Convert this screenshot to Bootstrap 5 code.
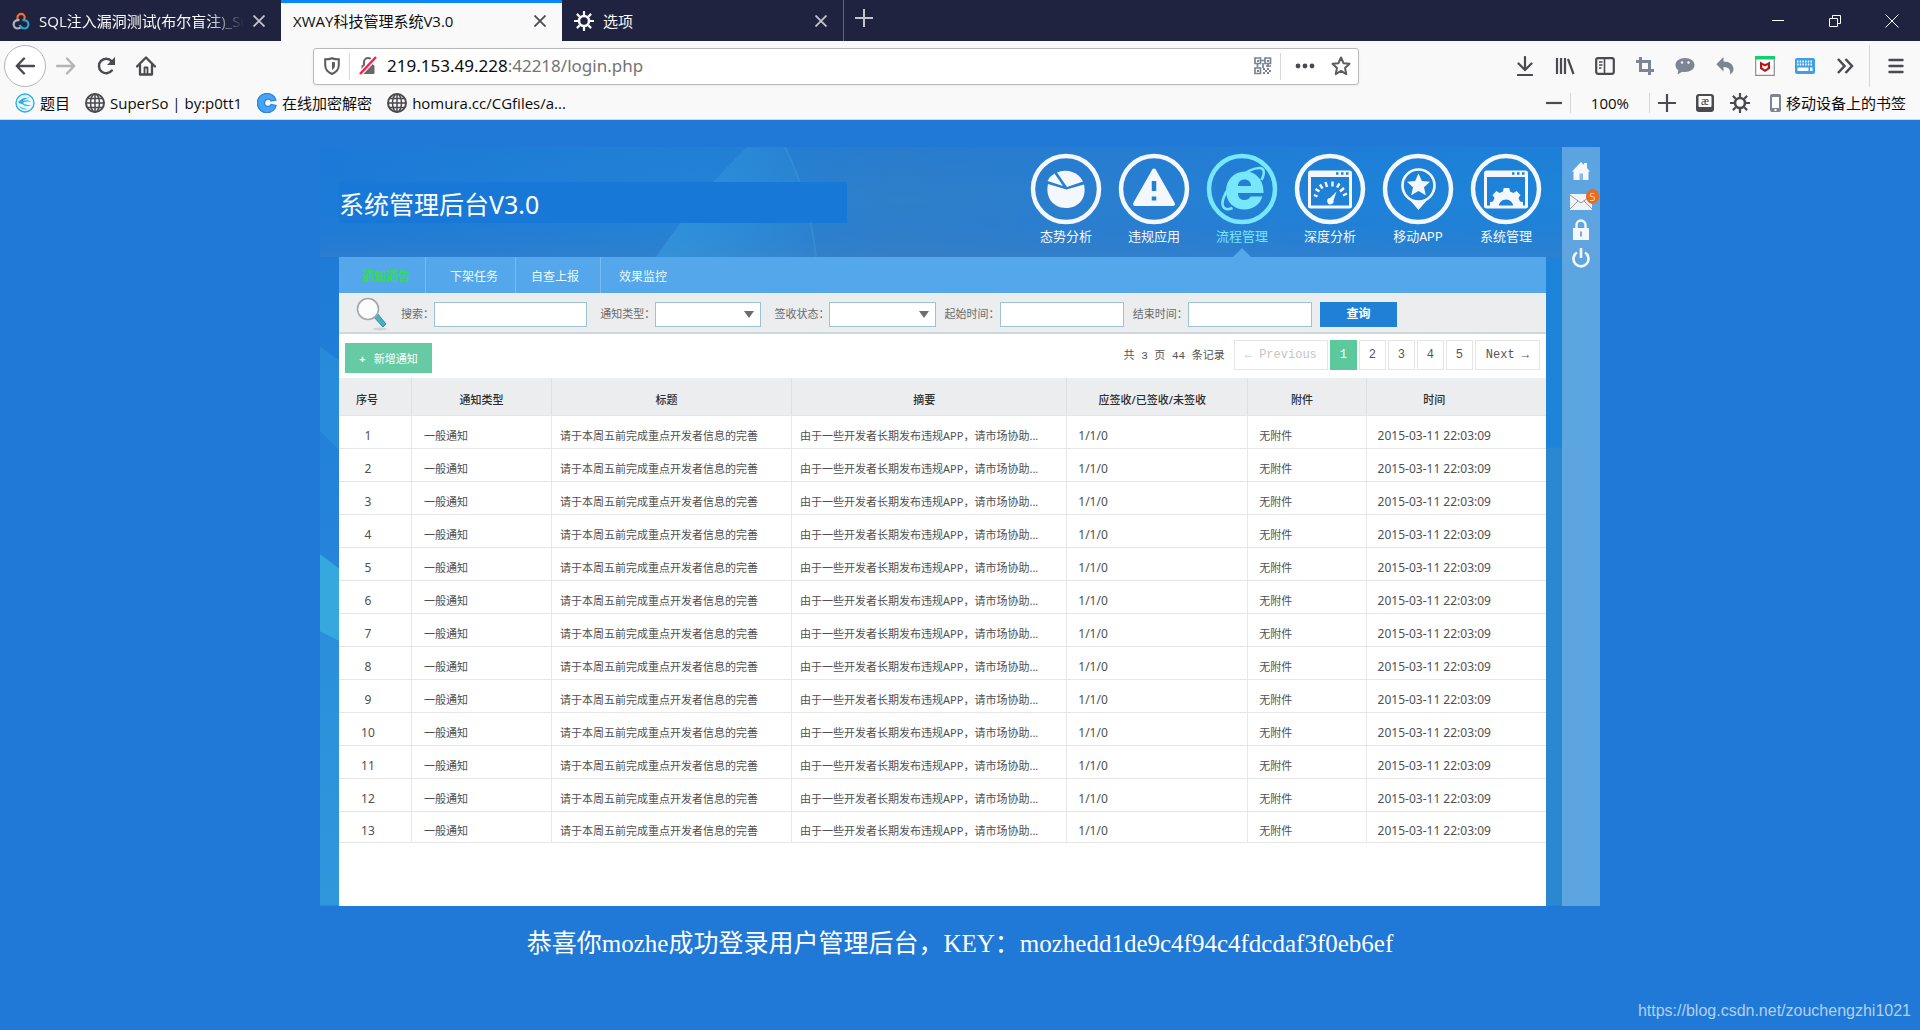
<!DOCTYPE html>
<html lang="zh-CN">
<head>
<meta charset="utf-8">
<meta name="viewport" content="width=device-width, initial-scale=1">
<title>XWAY科技管理系统V3.0</title>
<link href="https://cdn.jsdelivr.net/npm/bootstrap@5.3.0/dist/css/bootstrap.min.css" rel="stylesheet">
<style>
  body { font-family: "Open Sans", "Noto Sans CJK SC", sans-serif; font-size: 15px; line-height: 20px; color: #0c0c0d; background: #2079d6; }
  button { background: none; border: 0; padding: 0; color: inherit; }
  svg { display: block; flex: none; }
  a { color: inherit; text-decoration: none; }

  /* tab strip */
  .tabstrip { background: #20233f; height: 41px; color: #f9f9fa; }
  .browser-tab { width: 281px; padding: 0 16px 0 12px; gap: 9px; }
  .browser-tab .tab-title { flex: 1; min-width: 0; overflow: hidden; white-space: nowrap; }
  .browser-tab.fading .tab-title { -webkit-mask-image: linear-gradient(90deg, #000 82%, transparent); mask-image: linear-gradient(90deg, #000 82%, transparent); }
  .browser-tab.current { background: #f9f9fa; color: #0c0c0d; border-top: 3px solid #0a84ff; padding-bottom: 3px; }
  .browser-tab.tab-rule { width: 282px; border-right: 1px solid #62647a; }
  .win-btn { width: 57px; height: 41px; }

  /* toolbar */
  .chrome-bars { background: #f9f9fa; color: #4a4a4f; border-bottom: 1px solid #d7d7db; }
  .toolbar { display: grid; grid-template-columns: 313px minmax(0, 1fr) 561px; height: 50px; }
  .tool-btn { width: 40px; height: 36px; }
  .back-btn { width: 42px; height: 42px; border: 1px solid #b5b5b8; border-radius: 50%; background: #fff; }
  .urlbar { height: 37px; background: #fff; border: 1px solid #b9b9bb; border-radius: 3px; box-shadow: 0 1px 3px rgba(0,0,0,.06); }
  .urlbar .url-text { font-size: 17px; line-height: 24px; color: #737373; flex: 1; min-width: 0; padding-left: 10px; white-space: nowrap; overflow: hidden; }
  .urlbar .url-text { font-family: "Noto Sans", sans-serif; }
  .urlbar .url-text b { font-weight: 400; color: #0c0c0d; }
  .star-btn { padding: 0 7px 0 6px; }
  .menu-btn { margin-left: 6px; }
  .v-rule { width: 1px; background: #d7d7db; }
  .bookmarks { height: 28px; padding: 0 14px 4px 15px; color: #0c0c0d; white-space: nowrap; }
  .bookmarks a { gap: 5px; }
  .bookmarks > a { margin-right: 15px; }
  .charset-btn { padding: 0 16px 0 20px; }

  /* admin console */
  .console { background: #2381d3; color: #fff; }
  .console-bg { position: absolute; inset: 0; width: 100%; height: 100%; }
  .console-main { padding: 0 16px 0 19px; min-width: 0; }
  .console-head { height: 110px; margin-right: -4px; }
  .console-title { flex: 0 1 508px; height: 41px; margin-top: 35px; background: #1878d8; font: 400 25px/44px "Noto Sans", "Noto Sans CJK SC", sans-serif; white-space: nowrap; }
  .main-nav .nav-item { width: 88px; }
  .main-nav .nav-link { padding: 6px 0 0; color: #f4f8fc; font: 400 13px/26px "Liberation Mono", "Noto Sans CJK SC", sans-serif; }
  .main-nav .nav-link.active { color: #78e6fb; }
  .main-nav .nav-item.has-pointer::after { content: ""; position: absolute; left: 35px; bottom: 0; border: 9px solid transparent; border-top: 0; border-bottom-color: #54a7ea; }
  .sub-nav { background: #54a7ea; height: 36px; padding-left: 8px; font-size: 12px; line-height: 20px; }
  .sub-nav .nav-link { color: #eef7ff; padding: 0; }
  .sub-nav .nav-link.active { color: #2fe04a; font-weight: 700; }
  .sub-nav .nav-item { padding: 10px 15px 6px; border-right: 1px solid #79bcf0; }
  .sub-nav .nav-item:nth-child(2) { padding-left: 24px; padding-right: 17px; }
  .sub-nav .nav-item:nth-child(3) { padding-right: 21px; }
  .sub-nav .nav-item:nth-child(4) { border: 0; padding-left: 18px; }
  .filter-bar { background: #ebedef; border-bottom: 2px solid #cfd8dd; height: 41px; padding: 3px 149px 0 16px; color: #6b6b6b; font-size: 11px; }
  .filter-bar label { white-space: nowrap; }
  .filter-field { margin-right: 13px; }
  .filter-date { margin-right: 9px; }
  .filter-bar input, .filter-bar select { height: 25px; width: 100%; border: 1px solid #9cc3d3; border-radius: 0; background: #fff; padding: 0 4px; font-size: 12px; appearance: none; }
  .filter-bar div { display: flex; }
  .arrow-select::after { content: ""; position: absolute; right: 7px; top: 9px; border: 5px solid transparent; border-top: 7px solid #6d6d6d; border-bottom: 0; pointer-events: none; }
  .query-btn { background: #1f80d6; color: #fff; width: 77px; height: 25px; font-size: 12px; font-weight: 700; }
  .action-row { background: #fff; height: 44px; padding: 0 6px; color: #555; }
  .add-btn { background: #66cba5; color: #fff; width: 87px; height: 30px; font-size: 11px; padding-top: 2px; margin-top: 4px; }
  .pager { gap: 2px; font: 400 12px/28px "Liberation Mono", "Noto Sans CJK SC", monospace; }
  .pager .page-count { font-size: 11px; line-height: 32px; padding-right: 7px; }
  .pager a { min-width: 27px; height: 30px; border: 1px solid #e3e5e6; text-align: center; }
  .pager a.wide { padding: 0 10px; }
  .pager a.now { background: #5bc99c; border-color: #5bc99c; color: #fff; }
  .pager a.off { color: #c4c4c4; }

  .notice-wrap { background: #fff; padding-bottom: 63px; }
  .notice { width: 100%; table-layout: fixed; font: 400 11px/20px "Noto Sans", "Noto Sans CJK SC", sans-serif; color: #505050; }
  .notice th { background: #ecedef; color: #2d2d2d; font-weight: 500; font-size: 11px; height: 37px; text-align: center; padding: 7px 10px 0 0; border-right: 1px solid #dfe0e1; border-bottom: 1px solid #e4e5e6; }
  .notice td { height: 33px; padding: 8px 0 0 8px; white-space: nowrap; overflow: hidden; border-right: 1px solid #e8e8e8; border-bottom: 1px solid #e6e6e6; }
  .notice th:last-child, .notice td:last-child { border-right: 0; }
  .notice th:last-child { padding-right: 44px; }
  .notice th:first-child { padding-right: 16px; }
  .notice th:nth-child(2) { padding-right: 0; }
  .notice td:first-child { text-align: center; padding: 8px 14px 0 0; font-size: 12px; }
  .notice td:nth-child(2) { padding-left: 12px; }
  .notice td.latin { font-size: 12px; padding-left: 11px; }
  .notice td.attach { padding-left: 11px; }
  .notice tbody tr:last-child td { height: 31px; padding-top: 9px; }

  .side-rail { flex: 0 0 38px; background: rgba(120, 180, 228, .7); padding-top: 14px; }
  .side-rail a { height: 29px; width: 26px; }
  .mail-badge { position: absolute; right: -5px; top: -1px; width: 13px; height: 15px; border-radius: 50%; background: #ec6a1c; color: #ffd9b0; font-size: 11px; line-height: 15px; text-align: center; }

  .key-line { font: 400 25px/34px "Liberation Serif", "Noto Sans CJK SC", serif; color: #fff; margin: 21px 0 0; }
  .watermark { font: 400 16px/20px "Liberation Sans", Arial, sans-serif; color: rgba(255,255,255,.66); padding: 0 9px 9px 0; }
</style>
</head>
<body class="d-flex flex-column min-vh-100">

<header>
  <div class="tabstrip d-flex">
    <div class="browser-tab fading d-flex align-items-center">
      <svg width="18" height="18" viewBox="0 0 18 18" fill="none" stroke-width="2.2"><path d="M5.5 8V5.500a3.600 3.600 0 0 1 7.200 0c0 1.200-.5 2-1.300 2.800" stroke="#f0702c"/><path d="M7.500 8.300C4.500 7.500 1.600 9.500 1.600 12.300c0 2.500 2 4.200 4.200 4.200 1.700 0 2.700-.8 3.700-2" stroke="#aeb4c4"/><path d="M10.500 8.300c3-.8 5.900 1.200 5.900 4 0 2.500-2 4.200-4.200 4.200-2.600 0-3.500-1.700-4.700-3.500" stroke="#21a4d6"/></svg>
      <span class="tab-title">SQL注入漏洞测试(布尔盲注)_SQ</span>
      <button aria-label="关闭标签页"><svg width="12" height="12" viewBox="0 0 12 12" stroke="#c3c4cf" stroke-width="1.800"><path d="M.5.5l11 11M11.500.5l-11 11"/></svg></button>
    </div>
    <div class="browser-tab current d-flex align-items-center">
      <span class="tab-title">XWAY科技管理系统V3.0</span>
      <button aria-label="关闭标签页"><svg width="12" height="12" viewBox="0 0 12 12" stroke="#4a4a4f" stroke-width="1.800"><path d="M.5.5l11 11M11.500.5l-11 11"/></svg></button>
    </div>
    <div class="browser-tab tab-rule d-flex align-items-center">
      <svg width="20" height="20" viewBox="0 0 20 20" fill="none" stroke="#f9f9fa"><circle cx="10" cy="10" r="5" stroke-width="2.600"/><path d="M10 0v4M10 16v4M0 10h4M16 10h4M2.900 2.900l2.800 2.800M14.300 14.300l2.800 2.800M17.100 2.900l-2.800 2.800M5.700 14.300l-2.800 2.800" stroke-width="2.200"/></svg>
      <span class="tab-title">选项</span>
      <button aria-label="关闭标签页"><svg width="12" height="12" viewBox="0 0 12 12" stroke="#c3c4cf" stroke-width="1.800"><path d="M.5.5l11 11M11.500.5l-11 11"/></svg></button>
    </div>
    <button class="tool-btn d-flex align-items-center justify-content-center" aria-label="新建标签页"><svg width="18" height="18" viewBox="0 0 18 18" stroke="#c3c4cf" stroke-width="2"><path d="M9 0v18M0 9h18"/></svg></button>
    <div class="d-flex ms-auto">
      <button class="win-btn d-flex align-items-center justify-content-center" aria-label="最小化"><svg width="12" height="12" viewBox="0 0 12 12" stroke="#fff"><path d="M0 5.500h12"/></svg></button>
      <button class="win-btn d-flex align-items-center justify-content-center" aria-label="还原"><svg width="12" height="12" viewBox="0 0 12 12" stroke="#fff" fill="none"><path d="M.5 3.500h8v8h-8zM3.500 3V.5h8v8H9"/></svg></button>
      <button class="win-btn d-flex align-items-center justify-content-center" aria-label="关闭"><svg width="14" height="14" viewBox="0 0 14 14" stroke="#fff"><path d="M.5.5l13 13M13.500.5l-13 13"/></svg></button>
    </div>
  </div>

  <div class="chrome-bars">
    <div class="toolbar align-items-center">
      <div class="d-flex align-items-center ps-1">
        <button class="back-btn d-flex align-items-center justify-content-center" aria-label="后退"><svg width="20" height="18" viewBox="0 0 20 18" fill="none" stroke="currentColor" stroke-width="2.400" stroke-linecap="round" stroke-linejoin="round"><path d="M19 9H2M9 1.500L1.800 9 9 16.500"/></svg></button>
        <button class="tool-btn d-flex align-items-center justify-content-center" aria-label="前进"><svg width="20" height="18" viewBox="0 0 20 18" fill="none" stroke="#b4b4b7" stroke-width="2.400" stroke-linecap="round" stroke-linejoin="round"><path d="M1 9h17M11 1.500L18.200 9 11 16.500"/></svg></button>
        <button class="tool-btn d-flex align-items-center justify-content-center" aria-label="刷新"><svg width="20" height="20" viewBox="0 0 20 20"><path d="M15.800 14.500A7.200 7.200 0 1 1 15.500 5.200" fill="none" stroke="currentColor" stroke-width="2.500" stroke-linecap="round"/><path d="M19 1v8h-8z" fill="currentColor"/></svg></button>
        <button class="tool-btn d-flex align-items-center justify-content-center" aria-label="主页"><svg width="20" height="20" viewBox="0 0 20 20" fill="none" stroke="currentColor" stroke-width="2.300" stroke-linejoin="round" stroke-linecap="round"><path d="M1 10.500L10 1.500l9 9M4 9v9.500h12V9"/><path d="M8.500 18v-6.500h3V18" stroke-width="1.800"/></svg></button>
      </div>
      <div class="urlbar d-flex align-items-center">
        <div class="d-flex justify-content-center" style="width:35px"><svg width="16" height="18" viewBox="0 0 16 18" fill="none" stroke="#5b5b60" stroke-width="2"><path d="M8 1.200c2.200.9 4.300 1.100 6.800 1.100V8c0 4.500-2.800 7.300-6.800 9C4 15.300 1.200 12.500 1.200 8V2.300C3.700 2.300 5.800 2.100 8 1.200z"/><path d="M8 5v8c2-1.200 3-2.600 3-5V5.200z" fill="#5b5b60" stroke="none"/></svg></div>
        <div class="v-rule align-self-stretch my-1"></div>
        <div class="d-flex justify-content-end" style="width:27px"><svg width="18" height="20" viewBox="0 0 18 20"><path d="M5 9V6a4 4 0 0 1 8 0v3" fill="none" stroke="#68686c" stroke-width="2.200"/><rect x="2.500" y="9" width="13" height="9" rx="1" fill="#68686c"/><path d="M1 18L17 1" stroke="#fff" stroke-width="5"/><path d="M1 18L17 1" stroke="#ff1f4b" stroke-width="2.500"/></svg></div>
        <span class="url-text"><b>219.153.49.228</b>:42218/login.php</span>
        <svg width="18" height="18" viewBox="0 0 18 18" fill="none" stroke="#7b8390" stroke-width="1.700"><path d="M1 1h5.500v5.500H1zM11 1h5.500v5.500H11zM1 11h5.500v5.500H1zM7 3.500h4M3.500 7v4M9 6v5M12 9h5M14 7v3"/><path d="M9 11h2v2H9zM13 11h2v2h-2zM11 13h2v2h-2zM15 13h2v2h-2zM9 15h2v2H9zM13 15h2v2h-2zM3 3h2v2H3zM13 3h2v2h-2zM3 13h2v2H3z" fill="#7b8390" stroke="none"/></svg>
        <div class="v-rule align-self-stretch my-1 ms-2"></div>
        <button class="tool-btn d-flex align-items-center justify-content-center ms-1" aria-label="页面操作"><svg width="20" height="6" viewBox="0 0 20 6" fill="currentColor"><circle cx="3" cy="3" r="2.400"/><circle cx="10" cy="3" r="2.400"/><circle cx="17" cy="3" r="2.400"/></svg></button>
        <button class="star-btn" aria-label="添加书签"><svg width="20" height="20" viewBox="0 0 20 20" fill="none" stroke="#5b5b60" stroke-width="2" stroke-linejoin="round"><path d="M10 1.500l2.500 5.700 6 .6-4.500 4.100 1.300 6.200-5.300-3.200-5.300 3.200L6 11.900 1.500 7.800l6-.6z"/></svg></button>
      </div>
      <div class="d-flex align-items-center justify-content-end pe-1">
        <button class="tool-btn d-flex align-items-center justify-content-center" aria-label="下载"><svg width="18" height="20" viewBox="0 0 18 20" fill="none" stroke="currentColor" stroke-width="2.200" stroke-linecap="round"><path d="M9 1v12M2.500 7.500L9 14l6.500-6.500M2 19h14"/></svg></button>
        <button class="tool-btn d-flex align-items-center justify-content-center" aria-label="我的足迹"><svg width="20" height="18" viewBox="0 0 20 18" stroke="currentColor" stroke-width="2.200"><path d="M2 1v16M6 1v16M10 1v16M13 2l5.500 15"/></svg></button>
        <button class="tool-btn d-flex align-items-center justify-content-center" aria-label="侧栏"><svg width="20" height="18" viewBox="0 0 20 18" fill="none" stroke="currentColor" stroke-width="2.200"><rect x="1.200" y="1.200" width="17.600" height="15.600" rx="2"/><path d="M9.500 1v16" stroke-width="1.600"/><path d="M4 5h3.500M4 8h3.500M4 11h2.500" stroke-width="1.300"/></svg></button>
        <button class="tool-btn d-flex align-items-center justify-content-center" aria-label="截图"><svg width="18" height="18" viewBox="0 0 18 18" fill="none" stroke="#7d8592" stroke-width="3"><path d="M0 4.500h13.500V18M4.500 0v13.500H18"/></svg></button>
        <button class="tool-btn d-flex align-items-center justify-content-center" aria-label="聊天"><svg width="20" height="18" viewBox="0 0 20 18"><path d="M10 1c5.500 0 9.500 3 9.500 7s-4 7-9.500 7c-1 0-2-.1-2.800-.3L2.500 17.500l.8-4.300C1.500 12 .5 10.200.5 8 .5 4 4.500 1 10 1z" fill="#7d8592"/><circle cx="7" cy="5.500" r="1.200" fill="#f9f9fa"/><circle cx="13.500" cy="5.500" r="1.200" fill="#f9f9fa"/></svg></button>
        <button class="tool-btn d-flex align-items-center justify-content-center" aria-label="撤销"><svg width="18" height="18" viewBox="0 0 18 18"><path d="M7.500 0v4.500C14 4.500 17.500 8 17.500 12c0 2.500-1.500 4.500-3.500 5.500 1-4.500-1-7.500-6.500-7.500v4.500L.3 7.200z" fill="#7d8592"/></svg></button>
        <button class="tool-btn d-flex align-items-center justify-content-center" aria-label="安全顾问"><svg width="20" height="20" viewBox="0 0 20 20"><path d="M.7 1h18.600v18.300H.7z" fill="#fff" stroke="#8d8d90" stroke-width="1.200"/><path d="M0 0h20v3.500H0z" fill="#12cf72"/><path d="M5 5.500l3 1.800c1.400.7 2.600.7 4 0l3-1.800v7.300L10 16l-5-3.200z" fill="#b8141c"/><path d="M7.300 9l2.700 1.500L12.700 9v2.800L10 13.500l-2.700-1.700z" fill="#fff"/></svg></button>
        <button class="tool-btn d-flex align-items-center justify-content-center" aria-label="键盘"><svg width="20" height="16" viewBox="0 0 20 16"><rect width="20" height="16" rx="2" fill="#3d9fe6"/><path d="M2 3.500h16M2 6.500h16" stroke="#fff" stroke-width="1.800" stroke-dasharray="1.500 1.200"/><path d="M2.500 9.500h11v3.500h-11zM15 9.500h2.500V13H15z" fill="#fff"/></svg></button>
        <button class="tool-btn d-flex align-items-center justify-content-center" aria-label="更多工具"><svg width="18" height="16" viewBox="0 0 18 16" fill="none" stroke="currentColor" stroke-width="2.500"><path d="M2 1l6.500 7L2 15M9.500 1L16 8l-6.500 7"/></svg></button>
        <div class="v-rule align-self-stretch ms-1" style="height:42px"></div>
        <button class="tool-btn menu-btn d-flex align-items-center justify-content-center" aria-label="菜单"><svg width="16" height="16" viewBox="0 0 16 16" stroke="currentColor" stroke-width="2.400" stroke-linecap="round"><path d="M1.500 2h13M1.500 8h13M1.500 14h13"/></svg></button>
      </div>
    </div>
    <nav class="bookmarks d-flex align-items-center" aria-label="书签">
      <a href="#" class="d-flex align-items-center"><svg width="20" height="20" viewBox="0 0 20 20"><circle cx="10" cy="10" r="9" fill="#e9f8fd" stroke="#2bb2e6" stroke-width="1.400"/><path d="M3 9c3-4 8-5 12-4-4 0-6 2-7 3 3-1 6-1 8 1-4-1-7 0-8 1 2 2 5 2 8 2-3 2-7 1-9-1-2 0-3-1-4-2zM4 13c3 2 6 3 9 3-4 1-7 0-9-3z" fill="#2bb2e6"/></svg>题目</a>
      <a href="#" class="d-flex align-items-center"><svg width="20" height="20" viewBox="0 0 20 20" fill="none" stroke="#4a4a4f" stroke-width="1.500"><circle cx="10" cy="10" r="9" stroke-width="2"/><ellipse cx="10" cy="10" rx="4.500" ry="9"/><path d="M10 1v18M1 10h18M2.500 5.500h15M2.500 14.500h15"/></svg>SuperSo | by:p0tt1</a>
      <a href="#" class="d-flex align-items-center"><svg width="20" height="20" viewBox="0 0 20 20"><path d="M17.500 4A9.700 9.700 0 1 0 18 15.500l1-3-5-1c-1.500 3-6.500 2.500-6.500-1.500S12.500 5 14 8l5-1z" fill="#45a4f5" stroke="#2b83d8" stroke-width="1.200"/></svg>在线加密解密</a>
      <a href="#" class="d-flex align-items-center"><svg width="20" height="20" viewBox="0 0 20 20" fill="none" stroke="#4a4a4f" stroke-width="1.500"><circle cx="10" cy="10" r="9" stroke-width="2"/><ellipse cx="10" cy="10" rx="4.500" ry="9"/><path d="M10 1v18M1 10h18M2.500 5.500h15M2.500 14.500h15"/></svg>homura.cc/CGfiles/a...</a>
      <div class="d-flex align-items-center ms-auto">
        <button class="me-2" aria-label="缩小"><svg width="16" height="16" viewBox="0 0 16 16" stroke="#4a4a4f" stroke-width="2.200"><path d="M0 8h16"/></svg></button>
        <div class="v-rule align-self-stretch"></div>
        <button class="px-3 mx-1">100%</button>
        <div class="v-rule align-self-stretch"></div>
        <button class="ms-2" aria-label="放大"><svg width="18" height="18" viewBox="0 0 18 18" stroke="#4a4a4f" stroke-width="2.200"><path d="M9 0v18M0 9h18"/></svg></button>
        <button class="charset-btn" aria-label="字符编码"><svg width="18" height="18" viewBox="0 0 18 18"><rect width="18" height="18" rx="3" fill="#4a4a4f"/><rect x="2.500" y="2" width="13" height="11" rx="1" fill="#fff"/><text x="9" y="10.500" font-size="12" text-anchor="middle" font-family="Liberation Serif, serif" fill="#333">æ</text></svg></button>
        <button aria-label="设置"><svg width="20" height="20" viewBox="0 0 20 20" fill="none" stroke="#4a4a4f"><circle cx="10" cy="10" r="5" stroke-width="2.600"/><path d="M10 0v4M10 16v4M0 10h4M16 10h4M2.900 2.900l2.800 2.800M14.300 14.300l2.800 2.800M17.100 2.900l-2.800 2.800M5.700 14.300l-2.800 2.800" stroke-width="2.200"/></svg></button>
        <a href="#" class="d-flex align-items-center ms-3 ps-1"><svg width="11" height="18" viewBox="0 0 11 18"><rect width="11" height="18" rx="2" fill="#7d8592"/><path d="M2 3h7v11H2z" fill="#fff"/><path d="M4.500 15h2v2h-2z" fill="#fff"/></svg>移动设备上的书签</a>
      </div>
    </nav>
  </div>
</header>

<main class="flex-grow-1 d-flex flex-column">
  <div class="row g-0 justify-content-center" style="padding-top:27px">
    <div class="col-8">
      <div class="console d-flex position-relative">
        <svg class="console-bg" viewBox="0 0 1280 758" preserveAspectRatio="none" aria-hidden="true">
          <defs>
            <linearGradient id="sky" x1="0" x2="1"><stop offset="0" stop-color="#1c7bd8"/><stop offset=".3" stop-color="#2384d5"/><stop offset=".45" stop-color="#2f7fc9"/><stop offset=".62" stop-color="#2a7fd0"/><stop offset=".8" stop-color="#1f82d8"/><stop offset="1" stop-color="#1d84d9"/></linearGradient>
            <linearGradient id="shade" x1="0" x2="0" y1="0" y2="1"><stop offset="0" stop-color="#1c75d4" stop-opacity=".3"/><stop offset=".5" stop-color="#1c75d4" stop-opacity="0"/><stop offset="1" stop-color="#3c7fc6" stop-opacity=".5"/></linearGradient>
            <linearGradient id="edge" x1="0" x2="0" y1="0" y2="1"><stop offset="0" stop-color="#1d7bd6"/><stop offset=".45" stop-color="#2584da"/><stop offset=".6" stop-color="#2b8fdc"/><stop offset="1" stop-color="#2f98dc"/></linearGradient>
            <linearGradient id="beam" x1="0" x2="1"><stop offset="0" stop-color="#3ea6e4" stop-opacity=".75"/><stop offset="1" stop-color="#3ea6e4" stop-opacity=".1"/></linearGradient>
          </defs>
          <path d="M0 0h1280v758H0z" fill="url(#sky)"/>
          <path d="M0 0h1280v110H0z" fill="url(#shade)"/>
          <path d="M0 110h20v648H0z" fill="url(#edge)"/>
          <path d="M427 0Q380 45 336 110h160Q490 50 465 0z" fill="url(#beam)" opacity=".6"/>
          <path d="M465 0q25 50 31 110" fill="none" stroke="#49a6df" stroke-opacity=".3" stroke-width="2"/>
          <path d="M0 199l20 15v90l-20-20z" fill="#2f93de" opacity=".6"/>
          <path d="M0 407l20 15v72l-20-10z" fill="#37a8de"/>
          <path d="M1226 300h16v458h-16z" fill="#2b87d0"/>
        </svg>

        <div class="console-main flex-grow-1 position-relative">
          <div class="console-head d-flex justify-content-between">
            <h1 class="console-title">系统管理后台V3.0</h1>
            <ul class="main-nav nav flex-nowrap text-center">
              <li class="nav-item"><a class="nav-link" href="#"><svg class="mx-auto" width="72" height="72" viewBox="0 0 72 72"><circle cx="36" cy="36" r="33" fill="none" stroke="currentColor" stroke-width="4.500"/><g fill="currentColor"><path d="M37 34L27 19.500a19 17 0 0 1 26 9z"/><path d="M33 33L17.500 28a17 17 0 0 1 7-7.500z"/><path d="M18 31l18.500 5.500L54 31.500C57 45 49 55 36 55S15 44 18 31z"/></g></svg>态势分析</a></li>
              <li class="nav-item"><a class="nav-link" href="#"><svg class="mx-auto" width="72" height="72" viewBox="0 0 72 72"><circle cx="36" cy="36" r="33" fill="none" stroke="currentColor" stroke-width="4.500"/><path d="M36 17.500L55 51H17z" fill="currentColor" stroke="currentColor" stroke-width="4" stroke-linejoin="round"/><path d="M36 28v10M36 43.500v4" stroke="#237fd4" stroke-width="4.500"/></svg>违规应用</a></li>
              <li class="nav-item has-pointer position-relative"><a class="nav-link active" href="#" aria-current="page"><svg class="mx-auto" width="72" height="72" viewBox="0 0 72 72"><circle cx="36" cy="36" r="33" fill="none" stroke="currentColor" stroke-width="4.500"/><path d="M57.500 40H32c0 4.500 2.500 7 6.500 7 3 0 5-1.500 6-3.500h12C54 51.500 47 56.500 38.500 56.500 28 56.500 20 49 20 38s8-19.500 19-19.500S58 27 57.500 40zM32 33h13c0-4-2.500-6.500-6.500-6.500S32 29 32 33z" fill="currentColor" fill-rule="evenodd"/><path d="M55.500 27c4-8 2.500-12-2-12C42 15 22 31 17.500 45c-3 9 1 13.500 9 10" fill="none" stroke="currentColor" stroke-width="2.600"/></svg>流程管理</a></li>
              <li class="nav-item"><a class="nav-link" href="#"><svg class="mx-auto" width="72" height="72" viewBox="0 0 72 72"><circle cx="36" cy="36" r="33" fill="none" stroke="currentColor" stroke-width="4.500"/><rect x="15.500" y="19" width="41" height="35" rx="1" fill="none" stroke="currentColor" stroke-width="3"/><path d="M15 18h42v6H15z" fill="currentColor"/><path d="M42 20.500h2.500M47 20.500h2.500M52 20.500h2.500" stroke="#237fd4" stroke-width="2.500"/><path d="M20 42l3.500 1.500M21.500 36l4 2.500M26 31.500l2.500 4M31.500 29l1.500 5M38.500 28.500v5M45.500 30.500l-2.500 4M50 35l-4 3.500M53 40.500l-4 2" stroke="currentColor" stroke-width="2.400"/><path d="M42.500 38.500l-3 9a3.200 3.200 0 1 1-3.500-2.500z" fill="currentColor"/></svg>深度分析</a></li>
              <li class="nav-item"><a class="nav-link" href="#"><svg class="mx-auto" width="72" height="72" viewBox="0 0 72 72"><circle cx="36" cy="36" r="33" fill="none" stroke="currentColor" stroke-width="4.500"/><path d="M27 46l9.500 11 9.500-11q-9.500 5-19 0z" fill="currentColor"/><circle cx="36.500" cy="32.500" r="16" fill="none" stroke="currentColor" stroke-width="2.600"/><path d="M36.500 20.500l3.400 7.500 8.100.8-6 5.500 1.800 8-7.300-4.200-7.300 4.200 1.800-8-6-5.500 8.100-.8z" fill="currentColor"/></svg>移动APP</a></li>
              <li class="nav-item"><a class="nav-link" href="#"><svg class="mx-auto" width="72" height="72" viewBox="0 0 72 72"><circle cx="36" cy="36" r="33" fill="none" stroke="currentColor" stroke-width="4.500"/><rect x="15.500" y="19" width="41" height="35" rx="1" fill="none" stroke="currentColor" stroke-width="3"/><path d="M15 18h42v6H15z" fill="currentColor"/><path d="M42 20.500h2.500M47 20.500h2.500M52 20.500h2.500" stroke="#237fd4" stroke-width="2.500"/><path d="M20 54v-5l3-.5 1.500-3.500-2-3 4-4 3 2 3.500-1.500.7-3.500h5.600l.7 3.500L43.500 40l3-2 4 4-2 3 1.500 3.500 3 .5v5h-9.500a7.500 7.500 0 0 0-15 0z" fill="currentColor"/></svg>系统管理</a></li>
            </ul>
          </div>

          <ul class="sub-nav nav align-items-center">
            <li class="nav-item"><a class="nav-link active" href="#">通知通告</a></li>
            <li class="nav-item"><a class="nav-link" href="#">下架任务</a></li>
            <li class="nav-item"><a class="nav-link" href="#">自查上报</a></li>
            <li class="nav-item"><a class="nav-link" href="#">效果监控</a></li>
          </ul>

          <form class="filter-bar d-flex align-items-center">
            <svg class="me-2" width="34" height="34" viewBox="0 0 34 34"><ellipse cx="25" cy="32" rx="7" ry="1.500" fill="#d3d3d3"/><path d="M18 19l10 11 3-3-9-11z" fill="#49b2c0" stroke="#2f8f9f"/><circle cx="13" cy="12" r="10.500" fill="#fcfcfd" stroke="#a3a6aa" stroke-width="1.600"/></svg>
            <label class="ps-1" for="kw">搜索：</label><div class="filter-field" style="flex:153 1 0"><input id="kw" type="text"></div>
            <label for="kind">通知类型：</label><div class="filter-field arrow-select position-relative" style="flex:106 1 0"><select id="kind"><option></option></select></div>
            <label for="state">签收状态：</label><div class="filter-date arrow-select position-relative" style="flex:106 1 0"><select id="state"><option></option></select></div>
            <label for="from">起始时间：</label><div class="filter-date" style="flex:124 1 0"><input id="from" type="text"></div>
            <label for="to">结束时间：</label><div class="me-2" style="flex:124 1 0"><input id="to" type="text"></div>
            <button class="query-btn" type="button">查询</button>
          </form>

          <div class="action-row d-flex justify-content-between align-items-center">
            <button class="add-btn" type="button"><b class="me-2">+</b>新增通知</button>
            <nav class="pager d-flex" aria-label="分页">
              <span class="page-count">共 3 页 44 条记录</span>
              <a class="wide off" href="#">← Previous</a><a class="now" href="#">1</a><a href="#">2</a><a href="#">3</a><a href="#">4</a><a href="#">5</a><a class="wide" href="#">Next →</a>
            </nav>
          </div>

          <div class="notice-wrap">
            <table class="notice">
              <colgroup><col style="width:6%"><col style="width:11.600%"><col style="width:19.900%"><col style="width:22.800%"><col style="width:15%"><col style="width:9.800%"><col style="width:14.900%"></colgroup>
              <thead><tr><th>序号</th><th>通知类型</th><th>标题</th><th>摘要</th><th>应签收/已签收/未签收</th><th>附件</th><th>时间</th></tr></thead>
              <tbody id="notice-rows"></tbody>
            </table>
          </div>
        </div>

        <nav class="side-rail d-flex flex-column align-items-center position-relative" aria-label="快捷操作">
          <a href="#" aria-label="首页"><svg class="mx-auto" width="18" height="20" viewBox="0 0 18 20" fill="#f4f8fc"><path d="M9 1l3 3V2h3v5l3 3.500h-1.500V19H1.500v-8.500H0z"/><path d="M7.500 12.500h3.500V19H7.500z" fill="#8db9de"/></svg></a>
          <a href="#" class="position-relative" aria-label="消息"><svg class="mx-auto mt-1" width="22" height="16" viewBox="0 0 22 16"><path d="M0 0h22v16H0z" fill="#f1f3f5"/><path d="M0 1l11 8 11-8M0 15l8-8M22 15l-8-8" fill="none" stroke="#8a9aa8"/></svg><span class="mail-badge">5</span></a>
          <a href="#" aria-label="锁定"><svg class="mx-auto" width="16" height="21" viewBox="0 0 16 21"><path d="M3.500 10V6a4.500 4.500 0 0 1 9 0v4" fill="none" stroke="#f4f8fc" stroke-width="2.400"/><path d="M0 9h16v12H0z" fill="#f4f8fc"/><path d="M8 12.500v5" stroke="#7aa9d2" stroke-width="2"/></svg></a>
          <a href="#" aria-label="退出"><svg class="mx-auto" width="18" height="20" viewBox="0 0 18 20" fill="none" stroke="#f4f8fc" stroke-width="2.600"><path d="M5 4.500a7.500 7.500 0 1 0 8 0M9 0v10"/></svg></a>
        </nav>
      </div>
    </div>
  </div>

  <p class="key-line text-center">恭喜你mozhe成功登录用户管理后台，KEY：mozhedd1de9c4f94c4fdcdaf3f0eb6ef</p>
  <footer class="watermark mt-auto text-end">https://blog.csdn.net/zouchengzhi1021</footer>
</main>

<script>
  const body = document.getElementById('notice-rows');
  for (let n = 1; n <= 13; n++) {
    body.insertAdjacentHTML('beforeend',
      `<tr><td>${n}</td><td>一般通知</td><td>请于本周五前完成重点开发者信息的完善</td>` +
      `<td>由于一些开发者长期发布违规APP，请市场协助...</td><td class="latin">1/1/0</td>` +
      `<td class="attach">无附件</td><td class="latin">2015-03-11 22:03:09</td></tr>`);
  }
</script>
<script src="https://cdn.jsdelivr.net/npm/bootstrap@5.3.0/dist/js/bootstrap.bundle.min.js"></script>
</body>
</html>
